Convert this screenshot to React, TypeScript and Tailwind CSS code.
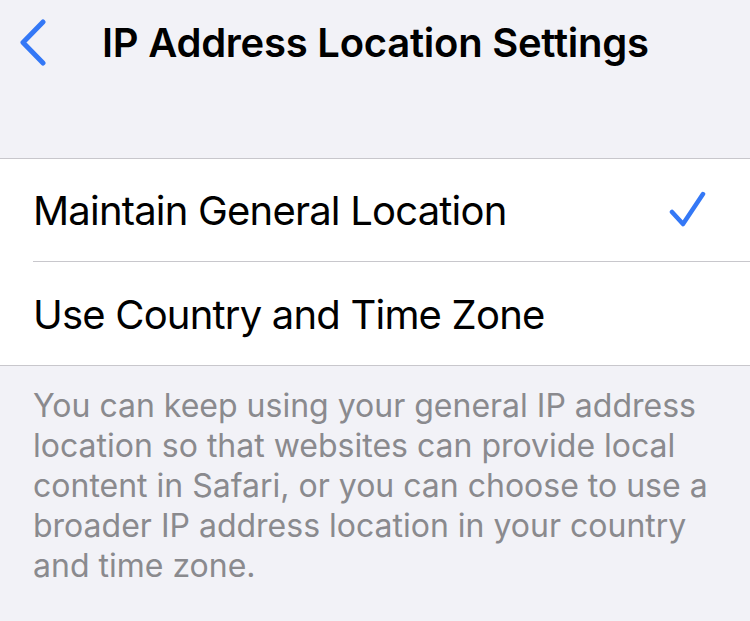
import React, { useState } from "react";

const options = ["Maintain General Location", "Use Country and Time Zone"];

const footerLines = [
  "You can keep using your general IP address",
  "location so that websites can provide local",
  "content in Safari, or you can choose to use a",
  "broader IP address location in your country",
  "and time zone.",
];

const ChevronLeft = () => (
  <svg width="30" height="48" viewBox="0 0 30 48" fill="none">
    <path d="M25 3 L5 23.5 L25 44" stroke="#3478f6" strokeWidth="5" strokeLinecap="round" strokeLinejoin="round" />
  </svg>
);

const CheckMark = () => (
  <svg width="40" height="38" viewBox="0 0 40 38" fill="none">
    <path d="M4 21 L15 33 L35 3" stroke="#3478f6" strokeWidth="4.5" strokeLinecap="round" strokeLinejoin="round" />
  </svg>
);

export default function App() {
  const [selected, setSelected] = useState(0);

  return (
    <div className="w-[750px] h-[621px] bg-[#f2f2f7] overflow-hidden font-['Inter',sans-serif] antialiased">
      <div className="h-[86px] flex items-center">
        <button className="w-[102px] pl-[18px] flex items-center">
          <ChevronLeft />
        </button>
        <h1 className="text-[40px] font-semibold text-black tracking-[-0.25px]">
          IP Address Location Settings
        </h1>
      </div>

      <div className="mt-[72px] bg-white border-y border-[#c8c7cc]">
        {options.map((label, i) => (
          <div key={label} className="pl-[33px]">
            <button
              onClick={() => setSelected(i)}
              className={`w-full h-[103px] pr-[42px] flex items-center justify-between text-left ${
                i < options.length - 1 ? "border-b border-[#c8c7cc]" : ""
              }`}
            >
              <span className="text-[40px] text-black tracking-[-0.8px] pt-[2px]">{label}</span>
              {selected === i && <CheckMark />}
            </button>
          </div>
        ))}
      </div>

      <p className="px-[33px] pt-[20px] text-[32px] leading-[40px] text-[#8a8a8e] whitespace-nowrap">
        {footerLines.map((line) => (
          <span key={line} className="block">
            {line}
          </span>
        ))}
      </p>
    </div>
  );
}
